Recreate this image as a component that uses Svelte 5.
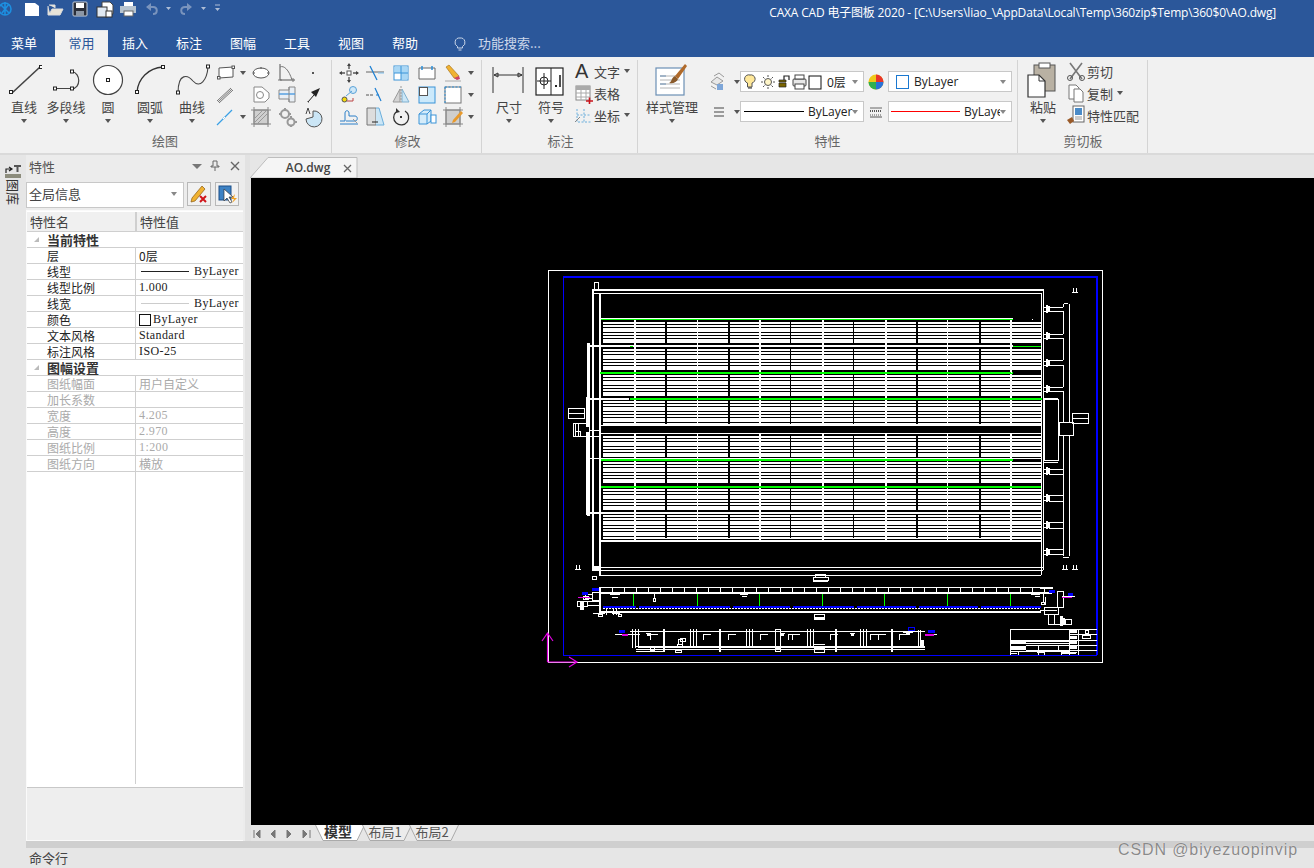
<script>
  const tabs = ["插入", "标注", "图幅", "工具", "视图", "帮助"];

  const g = 'fill="none" stroke="#555" stroke-width="1"';
  const icons = {
    line: `<path d="M6 31 L34 5" stroke="#444" stroke-width="1.6"/><rect x="3.5" y="28.5" width="3" height="3" fill="#fff" stroke="#222"/><rect x="33.5" y="3.5" width="3" height="3" fill="#fff" stroke="#222"/>`,
    poly: `<path d="M7 26.5 H24 C33 26.5 33 11 24 9.5" fill="none" stroke="#444" stroke-width="1.2"/><rect x="5.5" y="25" width="3" height="3" fill="#fff" stroke="#222"/><rect x="22.5" y="25" width="3" height="3" fill="#fff" stroke="#222"/><rect x="22.5" y="8" width="3" height="3" fill="#fff" stroke="#222"/>`,
    circle: `<circle cx="18" cy="18" r="14.5" fill="#fff" stroke="#444" stroke-width="1.2"/><rect x="16.5" y="16.5" width="3" height="3" fill="#fff" stroke="#222"/>`,
    arc: `<path d="M5 30 C6 17 16 6 31 5" fill="none" stroke="#333" stroke-width="1.3"/><rect x="3.5" y="28.5" width="3" height="3" fill="#fff" stroke="#222"/><rect x="29.5" y="3.5" width="3" height="3" fill="#fff" stroke="#222"/>`,
    curve: `<path d="M4 31 C4 10 14 13 19 19 C26 27 33 18 34 5" fill="none" stroke="#444" stroke-width="1.1"/><rect x="2.5" y="29" width="3" height="3" fill="#fff" stroke="#222"/><rect x="32.5" y="3" width="3" height="3" fill="#fff" stroke="#222"/>`,
    dim: `<path d="M2 5 V31 M32 5 V31 M3 13 H31 M3 13 L7 11 V15 Z M31 13 L27 11 V15 Z" fill="none" stroke="#333" stroke-width="1"/>`,
    sym: `<rect x="3" y="6" width="27" height="27" fill="#fff" stroke="#222" stroke-width="1.2"/><path d="M18 6 V33" stroke="#222"/><circle cx="11" cy="19" r="4" fill="none" stroke="#222"/><path d="M11 11 V27 M4 19 H18" stroke="#222"/><rect x="22" y="23" width="2" height="2" fill="#222"/><path d="M27 13 V25" stroke="#222" stroke-width="1.6"/>`,
    style: `<rect x="2" y="6" width="28" height="27" fill="#fff" stroke="#6b8fb5" stroke-width="1.2"/><path d="M6 14 H26 M6 18 H26 M6 22 H26 M6 26 H26" stroke="#b4b4b4"/><path d="M6 14 H12 M6 22 H12" stroke="#6b8fb5"/><path d="M31 2 L21 14 L24 17 L33 4 Z" fill="#b06a2a"/><path d="M21 14 C17 16 18 20 15 21 C19 22 23 20 24 17 Z" fill="#8a5a2a"/>`,
    paste: `<rect x="9" y="3" width="21" height="26" fill="#b9b1a3" stroke="#555"/><rect x="14" y="1" width="11" height="5" fill="#fff" stroke="#555"/><path d="M3 13 H14 L20 19 V35 H3 Z" fill="#fff" stroke="#333" stroke-width="1.2"/><path d="M14 13 V19 H20" fill="none" stroke="#333"/>`,

    rect: `<path d="M5 6 L19 5 V15 L5 16 Z" fill="#fff" ${g}/><rect x="3.5" y="14.5" width="2.5" height="2.5" fill="#fff" stroke="#555"/><rect x="18" y="4" width="2.5" height="2.5" fill="#fff" stroke="#555"/>`,
    ellipse: `<ellipse cx="11" cy="11" rx="8" ry="5" fill="#fff" ${g}/><path d="M3 11 H5 M17 11 H19 M11 5 V7" stroke="#555"/>`,
    graph: `<path d="M4 2 V18 H19" ${g}/><path d="M4 5 C8 3 13 8 16 18" fill="none" stroke="#777"/><path d="M2 18 H6 M17 16 V20" stroke="#777"/>`,
    dot: `<rect x="10" y="10" width="2" height="2" fill="#555"/>`,
    dbl: `<path d="M3 17 L17 4 M5 19 L19 6 M4 18 L18 5" stroke="#777" stroke-width="1"/>`,
    hatchA: `<path d="M4 3 H12 L19 9 V14 L15 18 H4 Z" fill="#fff" stroke="#888"/><circle cx="10" cy="11" r="3.5" fill="none" stroke="#888"/>`,
    thread: `<path d="M3 6 H13 V3 H19 V18 H13 V15 H3 Z" fill="#e8eef4" stroke="#888"/><path d="M3 10 H19" stroke="#4c9be0" stroke-width="1.4"/><path d="M13 3 V18" stroke="#888"/>`,
    pick: `<path d="M6 18 L12 11" stroke="#222"/><path d="M18 4 L9 8 L14 13 Z" fill="#222"/><path d="M5 17 L7 19" stroke="#999"/>`,
    ray: `<path d="M3 19 L18 4" stroke="#3aa0e6" stroke-width="1.2"/><path d="M9 13 L11 11" stroke="#fff"/>`,
    block: `<path d="M4 4 H18 V18 H4 Z" fill="#cfcfcf" stroke="#888"/><path d="M1 4 H21 M1 18 H21 M4 1 V21 M18 1 V21" stroke="#888"/><path d="M5 16 L16 5 M8 17 L17 8 M5 12 L12 5" stroke="#999"/>`,
    gear: `<circle cx="9" cy="8" r="4" fill="none" stroke="#999" stroke-width="2"/><circle cx="15" cy="16" r="3.5" fill="none" stroke="#999" stroke-width="2"/><path d="M9 2 V4 M3 8 H5 M13 8 H15 M15 10 V12 M19 16 H21 M15 20 V21" stroke="#999" stroke-width="2"/>`,
    ang: `<path d="M11 5 A8 8 0 1 1 4 13 L11 11 Z" fill="#cbe6f6" stroke="#555"/><path d="M4 8 L6 2 L8 8" fill="none" stroke="#444"/>`,

    move: `<rect x="9" y="9" width="4" height="4" fill="#fff" stroke="#555"/><path d="M11 2 V7 M11 15 V20 M2 11 H7 M15 11 H20" stroke="#555" stroke-width="1.4"/><path d="M11 1 L9 4 H13 Z M11 21 L9 18 H13 Z M1 11 L4 9 V13 Z M21 11 L18 9 V13 Z" fill="#444"/>`,
    trim: `<path d="M2 10 H20" stroke="#666"/><path d="M6 4 L13 18" stroke="#1c7fd2" stroke-width="1.3"/><path d="M14 11 H20" stroke="#7fc0ee"/>`,
    array: `<rect x="4" y="4" width="14" height="14" fill="#fff" stroke="#3a94d8"/><rect x="4.5" y="4.5" width="6.5" height="6.5" fill="#a9d7f5"/><rect x="11" y="4.5" width="6.5" height="6.5" fill="#a9d7f5"/><rect x="11" y="11" width="6.5" height="6.5" fill="#a9d7f5"/><path d="M4 11 H18 M11 4 V18" stroke="#3a94d8"/>`,
    chamfer: `<path d="M3 6 H19 V17 H3 Z" fill="#fff" stroke="#666"/><path d="M6 4 V8 M16 4 V8" stroke="#2b8fd8" stroke-width="1.5"/>`,
    pencil: `<path d="M4 5 L7 3 L17 14 L15 17 L12 16 Z" fill="#f0b232" stroke="#a06a10" stroke-width=".6"/><path d="M12 16 L17 14 L18 17 L15 18 Z" fill="#c46"/><path d="M3 19 H19" stroke="#aaa"/>`,
    explode: `<rect x="4" y="13" width="5" height="5" rx="2.5" fill="#f4d90a" stroke="#555"/><path d="M9 17 H15 V14" fill="none" stroke="#b44"/><circle cx="15" cy="6" r="3.5" fill="#cfe8f8" stroke="#5aa2d8"/><path d="M8 12 L14 7" stroke="#5aa2d8"/>`,
    extend: `<path d="M2 11 H10" stroke="#555" stroke-dasharray="3 1"/><path d="M11 4 L17 17" stroke="#1c7fd2" stroke-width="1.2"/><path d="M12 11 H15" stroke="#1c7fd2"/>`,
    mirror: `<path d="M10 5 V18 H3 Z" fill="#d4d4d4" stroke="#999"/><path d="M12 5 V18 H19 Z" fill="#cbe6f6" stroke="#7fb0d0"/><path d="M11 2 V20" stroke="#999" stroke-dasharray="2 1"/>`,
    scale: `<rect x="3" y="3" width="16" height="16" fill="#cbe9fb" stroke="#3a94d8"/><rect x="3.5" y="3.5" width="8" height="8" fill="#fff" stroke="#555"/>`,
    dashed: `<rect x="3" y="3" width="16" height="16" fill="#fff" stroke="#777"/><path d="M3 3 H19 M3 3 V19" stroke="#2b8fd8" stroke-dasharray="2 1.5"/>`,
    wave: `<path d="M2 15 H7 V7 C7 4 11 4 11 7 V10 H17 C20 10 20 15 17 15 H8" fill="none" stroke="#2b7fc8"/><path d="M2 18 H20" stroke="#2b7fc8"/><path d="M15 13 L19 17" stroke="#999"/>`,
    stretch: `<path d="M3 2 H12 V19 H3 Z" fill="#ddd" stroke="#777"/><path d="M12 2 H15 L20 19 H12" fill="#cbe6f6" stroke="#6aaedc"/><path d="M8 16 H14" stroke="#222"/>`,
    rotate: `<path d="M6 6 A7.5 7.5 0 1 0 15 5" fill="none" stroke="#333" stroke-width="1.3"/><path d="M6 2 L6 7 L10 6 Z" fill="#333"/><rect x="10" y="10" width="2" height="2" fill="#333"/>`,
    cube: `<path d="M3 8 L8 4 H15 V15 L11 18 H3 Z" fill="#d5ecfa" stroke="#3a94d8"/><path d="M3 8 H11 V18 M11 8 L15 4" fill="none" stroke="#3a94d8"/><rect x="15" y="9" width="5" height="8" fill="#fff" stroke="#3a94d8"/>`,
    hatch: `<rect x="4" y="4" width="14" height="14" fill="#cfcfcf" stroke="#888"/><path d="M1 4 H21 M1 18 H21 M4 1 V21 M18 1 V21" stroke="#888"/><path d="M19 5 L11 14 L10 17 L13 16 L21 7 Z" fill="#e89a2c"/>`,

    layerman: `<path d="M3 11 L9 6 L15 10 L9 14 Z" fill="#e8e8e8" stroke="#999"/><path d="M6 5 L11 2 L16 6" fill="none" stroke="#999"/><rect x="9" y="13" width="6" height="6" fill="#7ea6d8"/><path d="M3 15 L8 18" stroke="#999"/>`,
    lines: `<path d="M6 7 H16 M6 11 H16 M6 15 H16" stroke="#444" stroke-width="1.2"/>`,
    wheel: `<circle cx="11" cy="11" r="7.5" fill="#f0c818"/><path d="M11 11 V3.5 A7.5 7.5 0 0 1 18.5 11 Z" fill="#e8352b"/><path d="M11 11 H18.5 A7.5 7.5 0 0 1 11 18.5 Z" fill="#2a72d8"/><path d="M11 11 V18.5 A7.5 7.5 0 0 1 3.5 11 Z" fill="#30b050"/>`,
    lw: `<path d="M5 7 H17" stroke="#444" stroke-width=".8"/><path d="M5 10 H17" stroke="#555" stroke-dasharray="1 1" stroke-width="2"/><path d="M5 14 H17" stroke="#555" stroke-dasharray="1 1"/><path d="M5 16 H17" stroke="#555"/>`,

    text: `<text x="3" y="18" font-family="Liberation Sans" font-size="20" fill="#333">A</text>`,
    table: `<rect x="4" y="4" width="14" height="14" fill="#fff" stroke="#888"/><path d="M4 4 H18 V8 H4 Z" fill="#aaa"/><path d="M4 11 H18 M4 15 H18 M9 4 V18 M14 4 V18" stroke="#aaa"/><path d="M14 19 H21 M17.5 15.5 V22" stroke="#c8141c" stroke-width="1.6"/>`,
    coord: `<path d="M5 5 V18 H19 M5 11 H19 M12 5 V18" fill="none" stroke="#6aaedc" stroke-dasharray="2 1.5"/><path d="M3 18 L8 13" stroke="#888"/>`,
    cut: `<path d="M5 3 L17 19 M17 3 L5 19" stroke="#777" stroke-width="1.6"/><circle cx="5" cy="18" r="2.5" fill="none" stroke="#555"/><circle cx="17" cy="18" r="2.5" fill="none" stroke="#555"/>`,
    copy: `<path d="M4 3 H11 L14 6 V17 H4 Z" fill="#fff" stroke="#777"/><path d="M9 7 H15 L18 10 V20 H9 Z" fill="#fff" stroke="#777"/>`,
    match: `<rect x="8" y="2" width="11" height="16" fill="#fff" stroke="#666"/><rect x="10" y="4" width="7" height="7" fill="#4a8bc8"/><path d="M10 13 H17 M10 15 H17" stroke="#999"/><path d="M2 16 L7 13 L9 17 L5 20 Z" fill="#9a5a28"/>`,

    erase: `<path d="M4 15 L14 3 L17 6 L7 18 L3 19 Z" fill="#f0b232" stroke="#8a5a10" stroke-width=".7"/><path d="M12 13 L18 19 M18 13 L12 19" stroke="#d0161c" stroke-width="2"/>`,
    select: `<rect x="3" y="3" width="12" height="14" fill="#3d82c4" stroke="#1c4f88"/><path d="M8 6 V18 L11 15 L14 20 L16 19 L13 14 H17 Z" fill="#fff" stroke="#333" stroke-width=".7"/><path d="M19 11 L15 16 H18 L16 20 L21 15 H18 Z" fill="#f0a020"/>`
  };

  const drawIcons = [
    ["rect", 1], ["ellipse"], ["graph"], ["dot"],
    ["dbl"], ["hatchA"], ["thread"], ["pick"],
    ["ray", 1], ["block"], ["gear"], ["ang"]
  ];
  const modIcons = [
    ["move"], ["trim"], ["array"], ["chamfer"], ["pencil", 1],
    ["explode"], ["extend"], ["mirror"], ["scale"], ["dashed", 1],
    ["wave"], ["stretch"], ["rotate"], ["cube"], ["hatch", 1]
  ];

  const props = [
    { head: "当前特性" },
    { name: "层", value: "0层" },
    { name: "线型", line: "#222", mono: "ByLayer" },
    { name: "线型比例", mono: "1.000", left: true },
    { name: "线宽", line: "#ccc", mono: "ByLayer" },
    { name: "颜色", swatch: true, mono: "ByLayer" },
    { name: "文本风格", mono: "Standard", left: true },
    { name: "标注风格", mono: "ISO-25", left: true },
    { head: "图幅设置" },
    { name: "图纸幅面", value: "用户自定义", off: true },
    { name: "加长系数", value: "", off: true },
    { name: "宽度", mono: "4.205", left: true, off: true },
    { name: "高度", mono: "2.970", left: true, off: true },
    { name: "图纸比例", mono: "1:200", left: true, off: true },
    { name: "图纸方向", value: "横放", off: true }
  ];

  // drawing is in page coordinates, the viewBox lines them up with the canvas
  const W = "#fff", G = "#00ff00", B = "#0000ff", M = "#e000e0";
  const shapes = [];
  const box = (x, y, w, h, c = W) => shapes.push({ x, y, w, h, c });
  const hl = (x1, x2, y, c = W, t = 1) => box(x1, y, x2 - x1, t, c);
  const vl = (x, y1, y2, c = W, t = 1) => box(x, y1, t, y2 - y1, c);
  const frame = (x, y, w, h, c = W) => {
    hl(x, x + w, y, c); hl(x, x + w + 1, y + h, c);
    vl(x, y, y + h, c); vl(x + w, y, y + h, c);
  };

  frame(548, 270, 554, 392);
  hl(564, 1097, 276, B, 2); vl(1096, 276, 655, B, 2);
  vl(563, 276, 655, B); hl(563, 1097, 655, B);

  // front view shell
  hl(592, 1044, 289, W, 2); hl(592, 1042, 293);
  vl(592, 289, 570, W, 2); vl(599, 293, 576, W, 2); vl(1043, 289, 570);  vl(1041, 293, 575);
  frame(594, 282, 4, 8);
  hl(592, 1043, 567); hl(592, 1043, 570); hl(600, 1041, 575);
  box(592, 566, 7, 4);
  frame(592, 576, 4, 3);

  // tube bundle
  const bands = [[322, 344], [349, 371], [375, 397], [401, 424], [436, 458], [462, 484], [489, 511], [515, 538]];
  const whiteCols = [[634, 2], [697, 1], [759, 2], [822, 2], [885, 2], [947, 1], [1010, 2]];
  const blackCols = [[601, 2], [665, 2], [728, 2], [790, 1], [853, 1], [916, 2], [979, 2]];
  for (const [y1, y2] of bands) {
    for (let y = y1; y < y2; y += 2.75) hl(603, 1041, Math.round(y), W, 2);
    for (const [x, t] of blackCols) box(x, y1 - 1, t, y2 - y1 + 1, "#000");
  }
  for (const [x, t] of whiteCols) { vl(x, 320, 425, W, t); vl(x, 433, 541, W, t); }
  hl(601, 1013, 319, G); hl(600, 1013, 318);
  hl(590, 1013, 345, W, 2); hl(1013, 1041, 346, G); hl(630, 633, 346, G);
  box(1013, 370, 28, 5, "#000"); hl(600, 1013, 372, G, 2);
  hl(590, 629, 398, W, 2); hl(630, 1042, 398, G, 2);
  hl(600, 1041, 425); hl(600, 1041, 433);
  hl(601, 1013, 459, G, 2); hl(590, 1013, 458);
  box(1013, 483, 28, 5, "#000"); hl(601, 1041, 486, G, 2);
  hl(590, 1041, 512, W, 2); hl(600, 1041, 540, W, 2);
  hl(1009, 1041, 458); box(1011, 372, 1, 1); box(1032, 319, 1, 1);

  // left nozzles and side pipes
  vl(587, 343, 516, W, 2); vl(589, 343, 516);
  vl(586, 397, 515, W); frame(568, 408, 16, 5); frame(568, 413, 16, 5);
  frame(573, 423, 14, 13); frame(575, 431, 5, 5, W); box(581, 427, 8, 5, "#000");
  frame(575, 423, 3, 13);
  hl(590, 600, 430); hl(590, 600, 436);

  // right loops and headers
  const nozzle = y => {
    hl(1043, 1047, y - 2); hl(1043, 1047, y + 2);
    box(1046, y - 4, 2, 8); box(1048, y - 3, 2, 6);
  };
  [309, 336, 363, 389, 471, 498, 525, 552].forEach(nozzle);
  for (const [y1, y2] of [[311, 334], [338, 360], [365, 387], [474, 495], [501, 522], [528, 549]]) {
    hl(1049, 1063, y1); vl(1063, y1, y2); hl(1049, 1063, y2);
  }
  hl(1050, 1063, 391); vl(1063, 391, 423);
  hl(1050, 1063, 307); vl(1063, 304, 307); hl(1064, 1068, 303); vl(1069, 304, 423);
  hl(1050, 1063, 554); vl(1063, 436, 556); vl(1069, 436, 556); hl(1063, 1069, 557);
  frame(1044, 399, 14, 61, W); hl(1044, 1058, 398);
  frame(1059, 422, 14, 13); frame(1072, 413, 16, 5); frame(1072, 418, 16, 5);
  hl(1044, 1058, 462); hl(1050, 1063, 469);

  // little tags
  const tag = (x, y) => { vl(x + 1, y, y + 4); vl(x + 4, y, y + 4); hl(x, x + 6, y + 4); };
  tag(1072, 288); tag(1062, 565); tag(1072, 565); tag(575, 565);
  frame(815, 574, 10, 3); frame(813, 577, 15, 3);
  hl(813, 828, 581);

  // side view
  for (const y of [587, 592]) hl(599, 1052, y);
  hl(599, 1052, 593);
  for (let x = 600; x < 1050; x += 12) vl(x, 587, 593);
  [633, 697, 759, 822, 884, 947, 1010].forEach(x => vl(x, 594, 607, G));
  box(603, 606, 438, 2, B);
  for (let x = 603; x < 1041; x += 3) box(x, 608, 2, 1, W);
  [636, 730, 790, 854, 916, 978].forEach(x => box(x, 606, 3, 2, "#000"));
  hl(599, 1041, 611); hl(599, 1041, 612);
  vl(599, 588, 613, W, 2);
  frame(592, 592, 7, 8); frame(585, 594, 7, 4); frame(577, 601, 10, 5);
  box(580, 601, 4, 9); hl(587, 599, 601); hl(587, 599, 605);
  frame(583, 596, 5, 3); hl(578, 590, 597, M); box(582, 592, 6, 3, B); box(592, 588, 7, 3, B);
  frame(598, 614, 4, 2); frame(618, 614, 3, 2); hl(593, 605, 613); hl(612, 620, 613);
  vl(613, 609, 615); vl(616, 609, 615); vl(606, 609, 615);
  hl(610, 620, 594); hl(612, 618, 597); hl(740, 748, 594); hl(742, 747, 596); frame(653, 598, 2, 3); vl(654, 594, 598);
  frame(814, 614, 10, 3); frame(814, 618, 10, 1); hl(1031, 1040, 594); hl(1035, 1040, 596);
  // right end of side view
  hl(1040, 1053, 587, W, 2); vl(1043, 593, 603); vl(1045, 597, 605); frame(1041, 602, 3, 2); frame(1057, 591, 6, 16);
  box(1049, 590, 6, 3, B); box(1068, 593, 5, 3, B); hl(1062, 1075, 596, W); hl(1062, 1072, 597, M);
  frame(1044, 607, 14, 7); frame(1048, 614, 6, 10); hl(1048, 1060, 624); box(1060, 616, 3, 10); box(1063, 618, 2, 7); frame(1065, 619, 6, 5);
  hl(1040, 1057, 610);

  // bottom view
  hl(630, 925, 631); hl(635, 925, 646); hl(638, 925, 647); hl(636, 925, 649);
  for (const x of [632, 690, 746, 807, 860]) { vl(x, 629, 648); vl(x + 3, 629, 648); vl(x + 6, 629, 648); }
  for (const x of [663, 719, 835, 891]) vl(x, 629, 652, W, 2);
  box(775, 629, 1, 20); box(780, 629, 1, 20); hl(775, 781, 629); frame(775, 648, 5, 3);
  for (const x of [650, 703, 728, 760, 788, 792, 830, 870, 878, 899]) {
    vl(x, 634, 640); hl(x, x + 8, 634);
  }
  for (const x of [646, 780, 850]) { hl(x, x + 5, 633, W); box(x + 1, 634, 3, 2); }
  vl(918, 630, 648, W); vl(920, 630, 648, W); box(921, 640, 3, 7); hl(903, 913, 632); box(906, 633, 4, 2);
  hl(615, 640, 634); box(619, 630, 6, 3, B); box(622, 634, 6, 2, M);
  box(928, 630, 7, 3, B); hl(925, 937, 634); box(925, 634, 9, 2, M);
  frame(908, 627, 6, 3, B); hl(640, 660, 647); hl(636, 665, 651);
  frame(650, 647, 4, 3); frame(677, 644, 5, 3); frame(678, 639, 4, 5); frame(680, 638, 5, 3); frame(675, 650, 6, 2);
  frame(814, 648, 10, 4); hl(814, 825, 644);

  // title block
  hl(1010, 1097, 629); hl(1010, 1069, 640); vl(1010, 629, 655); vl(1069, 629, 655);
  vl(1078, 629, 655); box(1011, 640, 15, 4); box(1011, 646, 15, 4);
  hl(1026, 1069, 641); hl(1026, 1069, 643); hl(1026, 1069, 645); hl(1026, 1069, 650); hl(1010, 1069, 651);
  hl(1069, 1097, 634); hl(1069, 1097, 640); hl(1069, 1097, 645); hl(1069, 1097, 650);
  for (const y of [630, 636, 641, 646]) box(1070, y, 7, 3);
  frame(1085, 630, 3, 3); frame(1082, 635, 8, 3);
  vl(1038, 651, 655); hl(1037, 1044, 652); vl(1044, 651, 655); vl(1018, 651, 655); vl(1061, 651, 655);
  hl(1061, 1077, 652);  frame(1038, 645, 20, 5, W); box(1011, 653, 6, 1); box(1062, 653, 14, 1);
</script>

<div class="app">
  <header class="titlebar">
    <svg class="qat" width="230" height="20" viewBox="0 0 230 20">
      <path d="M-1 9 A6 6 0 1 1 11 9 A6 6 0 1 1 -1 9 M1 5 L9 13 M9 4 L2 13 M5 2 V15" fill="none" stroke="#1d8fe0" stroke-width="1.6"/>
      <path d="M25 3 H35 L39 6 V16 H25 Z" fill="#fff"/>
      <path d="M48 6 V15 H60 L63 9 H52 L50 13 M49 5 H55 V8" fill="#e8e4d8" stroke="#ddd"/>
      <rect x="73" y="2" width="14" height="14" rx="1" fill="#2b2f3a" stroke="#c8d0da"/><rect x="76" y="3" width="8" height="5" fill="#fff"/><rect x="76" y="11" width="8" height="5" fill="#8c97a6"/>
      <path d="M102 2 H110 L113 5 V14 H102 Z" fill="#fff" stroke="#444"/><rect x="97" y="7" width="10" height="10" fill="#dfe8f2" stroke="#333"/><rect x="106" y="11" width="6" height="6" fill="#fff" stroke="#333"/>
      <rect x="124" y="2" width="9" height="5" fill="#fff"/><rect x="120" y="6" width="16" height="7" fill="#b7c4d0"/><rect x="124" y="11" width="9" height="5" fill="#fff" stroke="#666"/>
      <g fill="none" stroke="#7a94bd" stroke-width="2"><path d="M147 7 H153 C158 7 158 14 153 14"/><path d="M191 7 H185 C180 7 180 14 185 14"/></g>
      <path d="M146 7 L151 3 V11 Z M192 7 L187 3 V11 Z" fill="#7a94bd"/>
      <path d="M166 7 H171 L168.500 10 Z M201 7 H206 L203.500 10 Z M215 8 H220 L217.500 11 Z" fill="#aebdd6"/>
      <path d="M215 5 H220" stroke="#aebdd6"/>
    </svg>
    <span class="doc-title">CAXA CAD 电子图板 2020 - [C:\Users\liao_\AppData\Local\Temp\360zip$Temp\360$0\AO.dwg]</span>
  </header>

  <nav class="tabbar">
    <span class="tab first">菜单</span>
    <span class="tab active">常用</span>
    {#each tabs as t}<span class="tab">{t}</span>{/each}
    <svg class="bulb" width="14" height="16" viewBox="0 0 14 16"><path d="M7 2 A4.500 4.500 0 0 0 4.500 10.500 V12 H9.500 V10.500 A4.500 4.500 0 0 0 7 2 Z M5.500 14 H8.500" fill="none" stroke="#c9d5e8"/></svg>
    <span class="search">功能搜索...</span>
  </nav>

  <section class="ribbon">
    <div class="group draw">
      <div class="gbody">
        {#each [["line","直线"],["poly","多段线"],["circle","圆"],["arc","圆弧"],["curve","曲线"]] as [ic, label]}
          <div class="lg">
            <svg width="36" height="36" viewBox="0 0 36 36">{@html icons[ic]}</svg>
            <span>{label}</span><i class="caret"></i>
          </div>
        {/each}
        <div class="smallgrid draw-grid">
          {#each drawIcons as [ic, drop]}
            <div class="cell"><svg width="22" height="22" viewBox="0 0 22 22">{@html icons[ic]}</svg>{#if drop}<i class="caret side"></i>{/if}</div>
          {/each}
        </div>
      </div>
      <div class="glabel">绘图</div>
    </div>

    <div class="group mod">
      <div class="gbody">
        <div class="smallgrid mod-grid">
          {#each modIcons as [ic, drop]}
            <div class="cell"><svg width="22" height="22" viewBox="0 0 22 22">{@html icons[ic]}</svg>{#if drop}<i class="caret side"></i>{/if}</div>
          {/each}
        </div>
      </div>
      <div class="glabel">修改</div>
    </div>

    <div class="group note">
      <div class="gbody">
        <div class="lg w42"><svg width="36" height="36" viewBox="0 0 36 36">{@html icons.dim}</svg><span>尺寸</span><i class="caret"></i></div>
        <div class="lg w42"><svg width="36" height="36" viewBox="0 0 36 36">{@html icons.sym}</svg><span>符号</span><i class="caret"></i></div>
        <div class="col">
          <div class="sm"><svg width="22" height="22" viewBox="0 0 22 22">{@html icons.text}</svg><span>文字</span><i class="caret side"></i></div>
          <div class="sm"><svg width="22" height="22" viewBox="0 0 22 22">{@html icons.table}</svg><span>表格</span></div>
          <div class="sm"><svg width="22" height="22" viewBox="0 0 22 22">{@html icons.coord}</svg><span>坐标</span><i class="caret side"></i></div>
        </div>
      </div>
      <div class="glabel">标注</div>
    </div>

    <div class="group attr">
      <div class="gbody">
        <div class="lg w64"><svg width="36" height="36" viewBox="0 0 36 36">{@html icons.style}</svg><span>样式管理</span><i class="caret"></i></div>
        <div class="attr-rows">
          <div class="attr-row">
            <div class="mini"><svg width="22" height="22" viewBox="0 0 22 22">{@html icons.layerman}</svg><i class="caret side"></i></div>
            <div class="combo layer">
              <svg width="82" height="18" viewBox="0 0 82 18">
                <path d="M7 2 A4 4 0 0 0 4.500 10 V14 H9 V10 A4 4 0 0 0 7 2 Z" fill="#ffe89a" stroke="#555"/><path d="M5 15 H9" stroke="#333"/>
                <circle cx="25" cy="9" r="3.500" fill="#fff6c8" stroke="#555"/><path d="M25 2 V4 M25 14 V16 M18 9 H20 M30 9 H32 M20 4 L21.500 5.500 M30 4 L28.500 5.500 M20 14 L21.500 12.500 M30 14 L28.500 12.500" stroke="#555"/>
                <path d="M36 10 H43 V14 H36 Z M36 7 H43 V9 H36 Z" fill="#7a6400" stroke="#222" stroke-width=".7"/><path d="M41 7 V3 H46 V7" fill="none" stroke="#222" stroke-width="1.2"/>
                <rect x="50" y="6" width="13" height="7" rx="1" fill="#e8e8e8" stroke="#444"/><rect x="52" y="2" width="9" height="4" fill="#fff" stroke="#444"/><rect x="52" y="11" width="9" height="5" fill="#fff" stroke="#444"/>
                <rect x="66" y="3" width="12" height="13" fill="#fff" stroke="#111"/>
              </svg>
              <span>0层</span><i class="caret grey"></i>
            </div>
            <div class="mini wheel"><svg width="22" height="22" viewBox="0 0 22 22">{@html icons.wheel}</svg></div>
            <div class="combo wide"><b class="swatch blue"></b><span>ByLayer</span><i class="caret grey"></i></div>
          </div>
          <div class="attr-row">
            <div class="mini"><svg width="22" height="22" viewBox="0 0 22 22">{@html icons.lines}</svg><i class="caret side"></i></div>
            <div class="combo layer"><b class="sample"></b><span class="clip1">ByLayer</span><i class="caret grey"></i></div>
            <div class="mini wheel"><svg width="22" height="22" viewBox="0 0 22 22">{@html icons.lw}</svg></div>
            <div class="combo wide"><b class="sample red"></b><span class="clip2">ByLayer</span><i class="caret grey"></i></div>
          </div>
        </div>
      </div>
      <div class="glabel">特性</div>
    </div>

    <div class="group clip">
      <div class="gbody">
        <div class="lg w40"><svg width="36" height="36" viewBox="0 0 36 36">{@html icons.paste}</svg><span>粘贴</span><i class="caret"></i></div>
        <div class="col clipcol">
          <div class="sm"><svg width="22" height="22" viewBox="0 0 22 22">{@html icons.cut}</svg><span>剪切</span></div>
          <div class="sm"><svg width="22" height="22" viewBox="0 0 22 22">{@html icons.copy}</svg><span>复制</span><i class="caret side"></i></div>
          <div class="sm"><svg width="22" height="22" viewBox="0 0 22 22">{@html icons.match}</svg><span>特性匹配</span></div>
        </div>
      </div>
      <div class="glabel">剪切板</div>
    </div>
  </section>

  <main class="workspace">
    <aside class="strip">
      <svg width="18" height="14" viewBox="0 0 18 14"><path d="M2 9 V5 H7 M5 3 L8 5 L5 7" fill="none" stroke="#222" stroke-width="1.2"/><path d="M10 2 H17 M13.500 2 V8" stroke="#555" stroke-width="2"/><rect x="1" y="10" width="16" height="4" fill="#8c8c7c"/></svg>
      <span class="vtext">图库</span>
    </aside>

    <aside class="panel">
      <div class="ptitle">
        <span>特性</span>
        <i class="caret big"></i>
        <svg width="10" height="12" viewBox="0 0 10 12"><path d="M3 1 H7 V6 H9 V7 H1 V6 H3 Z M5 7 V11" fill="none" stroke="#666"/></svg>
        <svg width="10" height="10" viewBox="0 0 10 10"><path d="M1 1 L9 9 M9 1 L1 9" stroke="#666" stroke-width="1.4"/></svg>
      </div>
      <div class="ptools">
        <div class="pcombo"><span>全局信息</span><i class="caret grey"></i></div>
        <button class="pbtn"><svg width="22" height="22" viewBox="0 0 22 22">{@html icons.erase}</svg></button>
        <button class="pbtn"><svg width="22" height="22" viewBox="0 0 22 22">{@html icons.select}</svg></button>
      </div>
      <div class="ptable">
        <div class="phead"><span>特性名</span><span>特性值</span></div>
        {#each props as p}
          {#if p.head}
            <div class="prow head"><i class="tri"></i><b>{p.head}</b></div>
          {:else}
            <div class="prow" class:off={p.off}>
              <span class="pname">{p.name}</span>
              <span class="pval" class:spread={p.line}>
                {#if p.line}<b class="pline" style:background={p.line}></b>{/if}
                {#if p.swatch}<b class="pswatch"></b>{/if}
                {#if p.mono}<em>{p.mono}</em>{:else}{p.value}{/if}
              </span>
            </div>
          {/if}
        {/each}
        <div class="pempty"><span></span><span></span></div>
        <div class="pdesc"></div>
      </div>
    </aside>

    <div class="gutter"></div>

    <div class="docs">
      <div class="doctabs">
        <div class="doctab">
          <svg class="doctab-bg" width="108" height="21" viewBox="0 0 108 21"><path d="M0 21 L18 .5 H107 V21 Z" fill="#f5f5f5" stroke="#bdbdbd"/></svg>
          <span>AO.dwg</span>
          <svg class="doctab-x" width="9" height="9" viewBox="0 0 9 9"><path d="M1 1 L8 8 M8 1 L1 8" stroke="#666" stroke-width="1.3"/></svg>
        </div>
      </div>
      <div class="canvas">
        <svg width="1063" height="647" viewBox="251 178 1063 647" shape-rendering="crispEdges">
          {#each shapes as s}<rect x={s.x} y={s.y} width={s.w} height={s.h} fill={s.c} />{/each}
          <g shape-rendering="auto" fill="none" stroke="#e000e0" stroke-width="1.200">
            <path d="M547.500 662 V633 M542 641 L547.500 633 L553 641 M547.500 662 H577 M569 657 L577 662 L569 667" />
          </g>
        </svg>
      </div>
      <div class="sheets">
        <svg class="sheetnav" width="62" height="12" viewBox="0 0 62 12">
          <path d="M1 2 V10 M7 2 L3 6 L7 10 Z M22 2 L18 6 L22 10 Z M34 2 L38 6 L34 10 Z M50 2 L54 6 L50 10 Z M57 2 V10" fill="#777" stroke="#777"/>
        </svg>
        {#each [["模型", true], ["布局1", false], ["布局2", false]] as [label, now]}
          <span class="sheet" class:now>
            <svg width="50" height="16" viewBox="0 0 50 16"><path d="M.5 0 L8 15.500 H42 L49.500 0" fill={now ? "#fff" : "#ececec"} stroke="#aaa"/></svg>
            <em>{label}</em>
          </span>
        {/each}
      </div>
    </div>
  </main>

  <div class="splitter"></div>
  <footer class="cmd">命令行</footer>
  <div class="watermark">CSDN @biyezuopinvip</div>
</div>

<style>
  :global(body) {
    margin: 0;
    overflow: hidden;
    background: #e6e6e6;
  }

  .app {
    position: relative;
    width: 1314px;
    height: 868px;
    display: flex;
    flex-direction: column;
    overflow: hidden;
    font-family: "Noto Sans CJK SC", "Noto Sans", sans-serif;
    font-size: 13px;
    color: #444;
  }

  i, em, b {
    font-style: normal;
  }

  svg {
    display: block;
    flex: none;
  }

  .titlebar {
    height: 30px;
    background: #2b579a;
    display: flex;
    align-items: flex-start;
    justify-content: space-between;
    flex: none;
  }
  .doc-title {
    color: #fff;
    font-family: "Open Sans", "Noto Sans CJK SC", sans-serif;
    font-size: 12px;
    letter-spacing: -0.18px;
    line-height: 25px;
    margin-right: 38px;
    white-space: nowrap;
  }

  .tabbar {
    height: 27px;
    background: #2b579a;
    display: flex;
    align-items: stretch;
    flex: none;
  }
  .tab {
    width: 54px;
    text-align: center;
    color: #fff;
    line-height: 25px;
  }
  .tab.first {
    width: 48px;
    margin-right: 7px;
  }
  .tab.active {
    width: 53px;
    background: #f1f1f1;
    color: #2b579a;
    border-top: 1px solid #dfe5ee;
    line-height: 24px;
  }
  .bulb {
    margin: 6px 0 0 21px;
  }
  .search {
    color: #cdd8ea;
    line-height: 25px;
    margin-left: 11px;
  }

  .ribbon {
    height: 98px;
    flex: none;
    box-sizing: border-box;
    background: #f1f1f1;
    border-bottom: 2px solid #dadada;
    display: flex;
    padding-top: 3px;
  }
  .group {
    display: flex;
    flex-direction: column;
    height: 93px;
    box-sizing: border-box;
    border-right: 1px solid #d4d4d4;
  }
  .group.draw { width: 332px; padding-left: 3px; }
  .group.mod { width: 150px; padding-left: 6px; }
  .group.note { width: 156px; padding-left: 6px; }
  .group.attr { width: 380px; padding-left: 4px; }
  .group.clip { width: 130px; padding-left: 5px; }

  .gbody {
    flex: 1;
    display: flex;
    padding-top: 2px;
  }
  .glabel {
    height: 21px;
    line-height: 18px;
    text-align: center;
    color: #666;
    align-self: center;
    margin-left: -4px;
  }

  .lg {
    width: 42px;
    display: flex;
    flex-direction: column;
    align-items: center;
    flex: none;
  }
  .lg span {
    line-height: 18px;
    white-space: nowrap;
  }
  .lg.w42 { width: 42px; margin-right: 0; }
  .lg.w64 { width: 60px; }
  .lg.w40 { width: 40px; }

  .caret {
    display: block;
    width: 0;
    height: 0;
    border: 3px solid transparent;
    border-top: 4px solid #555;
    border-bottom: 0;
    margin-top: 3px;
  }
  .caret.side {
    margin: 0 0 0 4px;
  }
  .caret.grey {
    border-top-color: #888;
    margin: 0 0 0 auto;
  }
  .caret.big {
    border-width: 5px;
    border-top: 5px solid #777;
    border-bottom: 0;
    margin: 0 0 0 auto;
  }

  .smallgrid {
    display: grid;
    grid-auto-rows: 22px;
  }
  .draw-grid {
    grid-template-columns: 36px 26px 26px 26px;
    margin-left: 1px;
  }
  .mod-grid {
    grid-template-columns: 26px 26px 26px 26px 34px;
  }
  .cell {
    display: flex;
    align-items: center;
  }

  .col {
    display: flex;
    flex-direction: column;
    margin-top: -2px;
  }
  .sm {
    height: 22px;
    display: flex;
    align-items: center;
    white-space: nowrap;
  }
  .clipcol {
    margin-left: 2px;
  }

  .attr-rows {
    display: flex;
    flex-direction: column;
    gap: 9px;
    margin-top: 9px;
    margin-left: 6px;
  }
  .attr-row {
    display: flex;
    align-items: center;
    height: 21px;
  }
  .mini {
    width: 32px;
    display: flex;
    align-items: center;
  }
  .mini.wheel {
    width: 24px;
    justify-content: center;
  }
  .combo {
    box-sizing: border-box;
    height: 21px;
    background: #fff;
    border: 1px solid #c8c8c8;
    display: flex;
    align-items: center;
    padding: 0 5px 0 2px;
    font-family: "Open Sans", "Noto Sans CJK SC", sans-serif;
    font-size: 12px;
    color: #222;
    overflow: hidden;
  }
  .combo.layer {
    width: 124px;
  }
  .combo.wide {
    width: 124px;
  }
  .combo.layer span {
    margin-left: 2px;
  }
  .swatch {
    width: 11px;
    height: 12px;
    border: 1px solid #1a78d0;
    margin: 0 5px 0 5px;
    flex: none;
  }
  .sample {
    width: 60px;
    height: 1px;
    background: #000;
    margin: 0 2px 0 1px;
    flex: none;
  }
  .sample.red {
    width: 69px;
    background: #f00;
    margin: 0 4px 0 0;
  }
  .clip1 {
    width: 44px;
  }
  .clip2 {
    width: 36px;
    overflow: hidden;
    white-space: nowrap;
    flex: none;
  }

  .workspace {
    flex: 1;
    display: flex;
    min-height: 0;
  }
  .strip {
    width: 26px;
    flex: none;
    display: flex;
    flex-direction: column;
    align-items: center;
    padding-top: 9px;
    box-sizing: border-box;
    background: #e6e6e6;
    color: #333;
  }
  .vtext {
    writing-mode: vertical-rl;
    text-orientation: sideways;
    line-height: 14px;
    font-size: 13px;
    margin-top: 1px;
  }

  .panel {
    width: 219px;
    flex: none;
    display: flex;
    flex-direction: column;
    background: #ececec;
  }
  .ptitle {
    height: 27px;
    box-sizing: border-box;
    display: flex;
    align-items: center;
    gap: 8px;
    padding: 0 5px 5px 3px;
    color: #555;
    flex: none;
  }
  .ptitle svg:last-child {
    margin-left: 2px;
  }
  .ptools {
    height: 26px;
    display: flex;
    flex: none;
    gap: 4px;
  }
  .pcombo {
    width: 158px;
    box-sizing: border-box;
    background: #fff;
    border: 1px solid #c8c8c8;
    display: flex;
    align-items: center;
    padding: 0 6px 3px 2px;
  }
  .pbtn {
    width: 24px;
    height: 24px;
    box-sizing: border-box;
    padding: 0;
    background: #f1f1f1;
    border: 1px solid #b8b8b8;
    display: flex;
    align-items: center;
    justify-content: center;
  }
  .pbtn:first-of-type {
    margin-left: -1px;
  }
  .ptable {
    flex: 1;
    margin: 2px 2px 0 0;
    display: flex;
    flex-direction: column;
    border: 1px solid #fafafa;
    border-width: 1px 0 1px 1px;
    font-size: 12px;
    background: #fff;
    min-height: 0;
    color: #222;
  }
  .phead {
    height: 19px;
    flex: none;
    display: grid;
    grid-template-columns: 110px 1fr;
    background: #f0f0f0;
    border-bottom: 1px solid #cfcfcf;
    border-top: 1px solid #fff;
    color: #444;
    line-height: 20px;
    font-size: 13px;
  }
  .phead span {
    padding-left: 3px;
  }
  .phead span:first-child {
    border-right: 2px solid #cfcfcf;
    box-sizing: border-box;
  }
  .prow {
    height: 16px;
    flex: none;
    box-sizing: border-box;
    display: grid;
    grid-template-columns: 109px 1fr;
    border-bottom: 1px solid #cfcfcf;
    line-height: 15px;
  }
  .prow.head {
    display: flex;
    align-items: center;
    font-size: 13px;
  }
  .prow.head b {
    margin-left: 8px;
    font-weight: 700;
    color: #333;
  }
  .tri {
    width: 0;
    height: 0;
    margin-left: 7px;
    border-left: 5px solid transparent;
    border-bottom: 5px solid #bbb;
  }
  .pname {
    padding-left: 20px;
    border-right: 1px solid #cfcfcf;
    white-space: nowrap;
    overflow: hidden;
  }
  .pval {
    padding-left: 3px;
    display: flex;
    align-items: center;
    white-space: nowrap;
  }
  .pval em {
    font-family: "Liberation Serif", serif;
    font-size: 12px;
    letter-spacing: 0.4px;
  }
  .pval.spread em {
    margin-left: 5px;
  }
  .pline {
    width: 48px;
    height: 1px;
    margin-left: 2px;
  }
  .pswatch {
    width: 10px;
    height: 10px;
    border: 1px solid #111;
    margin-right: 2px;
  }
  .off {
    color: #aaa;
  }
  .pempty {
    flex: 1;
    display: grid;
    grid-template-columns: 109px 1fr;
    min-height: 0;
  }
  .pempty span:first-child {
    border-right: 1px solid #cfcfcf;
  }
  .pdesc {
    height: 52px;
    flex: none;
    background: #eeeeee;
    border-top: 1px solid #c8c8c8;
    margin-top: 3px;
    box-shadow: 0 -3px 0 #fff;
  }

  .gutter {
    width: 6px;
    flex: none;
    background: #e2e2e2;
  }

  .docs {
    flex: 1;
    display: flex;
    flex-direction: column;
    min-width: 0;
  }
  .doctabs {
    height: 23px;
    flex: none;
    background: #e6e6e6;
    display: flex;
    align-items: flex-end;
    margin-left: -1px;
  }
  .doctab {
    position: relative;
    width: 108px;
    height: 21px;
    display: flex;
    align-items: center;
    justify-content: center;
    color: #444;
    font-family: "Open Sans", sans-serif;
    font-size: 12px;
    font-weight: 600;
  }
  .doctab span {
    position: relative;
    margin-left: 8px;
  }
  .doctab-bg {
    position: absolute;
    left: 0;
    top: 0;
  }
  .doctab-x {
    position: absolute;
    right: 6px;
    top: 7px;
  }
  .canvas {
    height: 647px;
    flex: none;
    background: #000;
  }
  .sheets {
    height: 16px;
    flex: none;
    background: #e6e6e6;
    display: flex;
    align-items: stretch;
    font-size: 13px;
    color: #555;
  }
  .sheetnav {
    margin: 3px 0 0 2px;
  }
  .sheet {
    position: relative;
    width: 50px;
    margin-right: -3px;
    text-align: center;
    line-height: 13px;
  }
  .sheet svg {
    position: absolute;
    left: 0;
    top: 0;
  }
  .sheet em {
    position: relative;
    left: -2px;
  }
  .sheet.now {
    color: #333;
    font-weight: 700;
    font-size: 14px;
  }

  .splitter {
    height: 7px;
    background: #cfcfcf;
    margin-left: 26px;
    flex: none;
  }
  .cmd {
    height: 20px;
    flex: none;
    background: #e6e6e6;
    padding-left: 29px;
    line-height: 20px;
    color: #444;
  }

  .watermark {
    position: absolute;
    right: 16px;
    bottom: 9px;
    font-family: "Liberation Sans", sans-serif;
    font-size: 16px;
    letter-spacing: 0.9px;
    color: #8a8a8a;
    text-shadow: 0 0 1px #fff;
  }
</style>
